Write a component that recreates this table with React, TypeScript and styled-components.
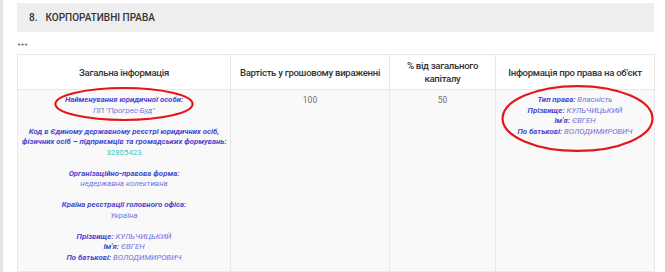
import React from "react";
import styled, { createGlobalStyle } from "styled-components";

const GlobalStyle = createGlobalStyle`
  html, body { margin: 0; padding: 0; background: #ffffff; }
  body { font-family: Roboto, "Noto Sans", "Liberation Sans", sans-serif; }
`;

const Page = styled.div`
  display: flex;
  flex-direction: column;
  height: 272px;
  overflow: hidden;
  box-sizing: border-box;
  border-left: 3px solid #e6e6e6;
  padding: 3px 11px 0 14px;
`;

const SectionHeader = styled.div`
  display: flex;
  align-items: center;
  gap: 8px;
  height: 30px;
  padding-left: 12px;
  background: #eeeeee;
  color: #333333;
  font-size: 10px;
  font-weight: 500;
  text-transform: uppercase;
`;

const Dots = styled.div`
  margin: 8px 0 0 0;
  height: 14px;
  font-family: "DejaVu Sans", sans-serif;
  font-size: 7px;
  letter-spacing: -0.6px;
  color: #666666;
  line-height: 10px;
`;

const Table = styled.table`
  width: 637px;
  border-collapse: collapse;
  table-layout: fixed;
`;

const Th = styled.th`
  background: #ffffff;
  border: 1px solid #e8e8e8;
  height: 34px;
  padding: 0 2px;
  color: #333333;
  font-size: 9.6px;
  font-weight: 500;
  letter-spacing: -0.3px;
  line-height: 13px;
  text-align: center;
  vertical-align: middle;
`;

const Td = styled.td`
  background: #f9f9f9;
  border: 1px solid #e8e8e8;
  padding: 5px 4px 8px;
  text-align: center;
  vertical-align: top;
  font-size: 7.8px;
  line-height: 10.5px;
`;

const Plain = styled.div`
  color: #707070;
  font-size: 8.5px;
  line-height: 10.5px;
`;

const Group = styled.div`
  & + & {
    margin-top: 10.5px;
  }
`;

const Line = styled.div`
  font-style: italic;
  white-space: nowrap;
`;

const Label = styled.span`
  color: #4848d0;
  font-weight: 700;
  font-style: italic;
`;

const Value = styled.span<{ $code?: boolean }>`
  color: ${(p) => (p.$code ? "#38cbbf" : "#7373dc")};
  font-style: ${(p) => (p.$code ? "normal" : "italic")};
`;

const Annotated = styled.div`
  position: relative;
`;

const Ring = styled.svg<{ $t: number; $r: number; $b: number; $l: number }>`
  position: absolute;
  top: ${(p) => p.$t}px;
  left: ${(p) => p.$l}px;
  width: calc(100% - ${(p) => p.$l + p.$r}px);
  height: calc(100% - ${(p) => p.$t + p.$b}px);
  overflow: visible;
  pointer-events: none;
`;

const RedEllipse: React.FC<{ t: number; r: number; b: number; l: number }> = ({ t, r, b, l }) => (
  <Ring $t={t} $r={r} $b={b} $l={l} preserveAspectRatio="none" viewBox="0 0 100 100">
    <ellipse
      cx="50"
      cy="50"
      rx="49"
      ry="47"
      fill="none"
      stroke="#e3161b"
      strokeWidth="2.2"
      vectorEffect="non-scaling-stroke"
    />
  </Ring>
);

export default function App() {
  return (
    <>
      <GlobalStyle />
      <Page>
        <SectionHeader>
          <span>8.</span>
          <span>Корпоративні права</span>
        </SectionHeader>
        <Dots>•••</Dots>
        <Table>
          <colgroup>
            <col style={{ width: 213 }} />
            <col style={{ width: 159 }} />
            <col style={{ width: 106 }} />
            <col style={{ width: 159 }} />
          </colgroup>
          <thead>
            <tr>
              <Th>Загальна інформація</Th>
              <Th>Вартість у грошовому вираженні</Th>
              <Th>% від загального капіталу</Th>
              <Th>Інформація про права на об'єкт</Th>
            </tr>
          </thead>
          <tbody>
            <tr>
              <Td>
                <Group>
                  <Annotated>
                    <RedEllipse t={-8} r={32} b={-5} l={32} />
                    <Line>
                      <Label>Найменування юридичної особи:</Label>
                    </Line>
                    <Line>
                      <Value>ПП "Прогрес-Буд"</Value>
                    </Line>
                  </Annotated>
                </Group>
                <Group>
                  <Line>
                    <Label>Код в Єдиному державному реєстрі юридичних осіб,</Label>
                  </Line>
                  <Line>
                    <Label>фізичних осіб – підприємців та громадських формувань:</Label>
                  </Line>
                  <Line>
                    <Value $code>32805423</Value>
                  </Line>
                </Group>
                <Group>
                  <Line>
                    <Label>Організаційно-правова форма:</Label>
                  </Line>
                  <Line>
                    <Value>недержавна колективна</Value>
                  </Line>
                </Group>
                <Group>
                  <Line>
                    <Label>Країна реєстрації головного офіса:</Label>
                  </Line>
                  <Line>
                    <Value>Україна</Value>
                  </Line>
                </Group>
                <Group>
                  <Line>
                    <Label>Прізвище:</Label> <Value>КУЛЬЧИЦЬКИЙ</Value>
                  </Line>
                  <Line>
                    <Label>Ім'я:</Label> <Value>ЄВГЕН</Value>
                  </Line>
                  <Line>
                    <Label>По батькові:</Label> <Value>ВОЛОДИМИРОВИЧ</Value>
                  </Line>
                </Group>
              </Td>
              <Td>
                <Plain>100</Plain>
              </Td>
              <Td>
                <Plain>50</Plain>
              </Td>
              <Td>
                <Annotated>
                  <RedEllipse t={-11} r={-4} b={-16} l={1} />
                  <Line>
                    <Label>Тип права:</Label> <Value>Власність</Value>
                  </Line>
                  <Line>
                    <Label>Прізвище:</Label> <Value>КУЛЬЧИЦЬКИЙ</Value>
                  </Line>
                  <Line>
                    <Label>Ім'я:</Label> <Value>ЄВГЕН</Value>
                  </Line>
                  <Line>
                    <Label>По батькові:</Label> <Value>ВОЛОДИМИРОВИЧ</Value>
                  </Line>
                </Annotated>
              </Td>
            </tr>
          </tbody>
        </Table>
      </Page>
    </>
  );
}
